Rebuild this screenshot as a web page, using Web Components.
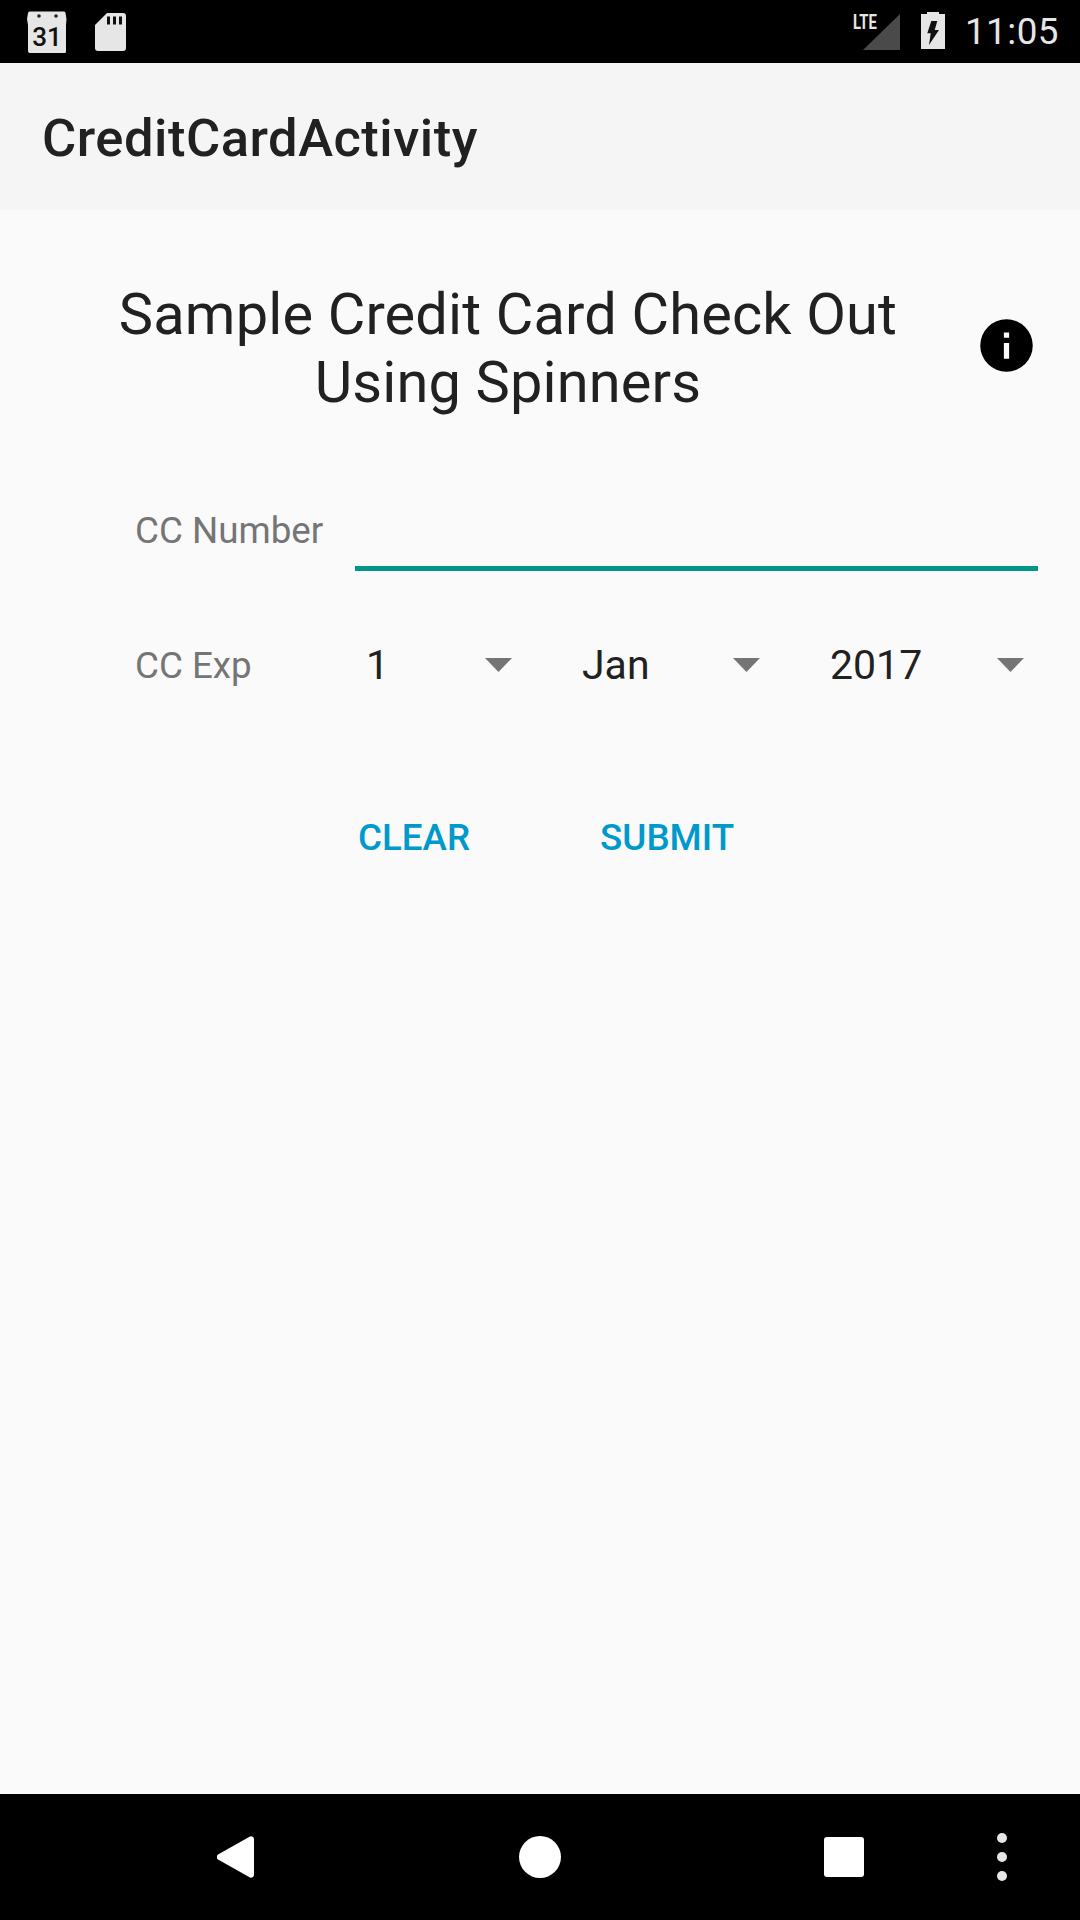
<!DOCTYPE html>
<html>
<head>
<meta charset="utf-8">
<style>
  html, body { margin: 0; padding: 0; }
  body {
    width: 1080px;
    height: 1920px;
    display: flex;
    flex-direction: column;
    background: #fafafa;
    font-family: Roboto, sans-serif;
    overflow: hidden;
  }
  check-out-page { flex: 1; }
</style>
</head>
<body>
<status-bar time="11:05"></status-bar>
<app-bar>CreditCardActivity</app-bar>
<check-out-page>
  <title-row>Sample Credit Card Check Out<br>Using Spinners</title-row>
  <form-row label="CC Number" class="number"><text-line></text-line></form-row>
  <form-row label="CC Exp" class="exp">
    <spin-ner value="1" style="width:216px;padding-left:11px;--arrow-right:59px"></spin-ner>
    <spin-ner value="Jan" style="width:247px;padding-left:11px;--arrow-right:58px"></spin-ner>
    <spin-ner value="2017" style="width:220px;--arrow-right:14px"></spin-ner>
  </form-row>
  <action-row>
    <flat-button>Clear</flat-button>
    <flat-button>Submit</flat-button>
  </action-row>
</check-out-page>
<nav-bar></nav-bar>

<script>
class StatusBar extends HTMLElement {
  constructor() {
    super();
    this.attachShadow({ mode: 'open' });
    this.shadowRoot.innerHTML = `
      <style>
        :host { display: flex; align-items: center; height: 63px; background: #000; color: #e6e6e6; }
        svg { display: block; flex: none; }
        .cal { margin-left: 27px; }
        .sd { margin-left: 28px; }
        .lte {
          margin-left: auto;
          width: 24px;
          font: 700 20px/20px Roboto, sans-serif;
          transform: translateY(-10px) scaleX(.74);
          transform-origin: left center;
          white-space: nowrap;
        }
        .signal { margin-left: -14px; }
        .battery { margin-left: 21px; margin-bottom: 2px; }
        .time { margin: 0 21px 0 20px; font-size: 36.75px; line-height: 63px; letter-spacing: .5px; }
      </style>
      <svg class="cal" width="40" height="42" viewBox="0 0 40 42">
        <path fill="#e6e6e6" d="M3 0.5h34q1.5 0 1.5 1.5l1 6-.5 6v26.5q0 1.5-1.5 1.5H2.5Q1 41.5 1 40V14L0 8l1-6q0-1.500 2-1.500z"/>
        <circle cx="12" cy="5" r="1.800" fill="#222"/><circle cx="29" cy="5" r="1.800" fill="#222"/>
        <text x="20" y="35" text-anchor="middle" font-family="Roboto" font-size="26" font-weight="500" fill="#111">31</text>
      </svg>
      <svg class="sd" width="31" height="38" viewBox="0 0 31 38">
        <path fill="#e6e6e6" d="M12 0h16q3 0 3 3v32q0 3-3 3H3q-3 0-3-3V12z"/>
        <path fill="#111" d="M12 3.500h3v8h-3zM18 3.500h3v8h-3zM24 3.500h3v8h-3z"/>
      </svg>
      <span class="lte">LTE</span>
      <svg class="signal" width="37" height="36" viewBox="0 0 37 36"><path fill="#4a4a4a" d="M37 0v36H0z"/></svg>
      <svg class="battery" width="24" height="37" viewBox="0 0 24 37">
        <path fill="#e6e6e6" d="M6 0h12v2h6v35H0V2h6z"/>
        <path fill="#111" d="M10.300 9h6l-2.600 9H18L8 33l1.700-11.700H6.300z"/>
      </svg>
      <span class="time"></span>
    `;
  }

  connectedCallback() {
    this.shadowRoot.querySelector('.time').textContent = this.getAttribute('time');
  }
}

class AppBar extends HTMLElement {
  constructor() {
    super();
    this.attachShadow({ mode: 'open' });
    this.shadowRoot.innerHTML = `
      <style>
        :host {
          display: flex;
          align-items: center;
          height: 147px;
          padding-left: 42px;
          background: #f5f5f5;
          color: #212121;
          font: 500 52.5px Roboto, sans-serif;
          letter-spacing: .5px;
        }
        span { margin-top: 2px; }
      </style>
      <span><slot></slot></span>
    `;
  }
}

class CheckOutPage extends HTMLElement {
  constructor() {
    super();
    this.attachShadow({ mode: 'open' });
    this.shadowRoot.innerHTML = `
      <style>
        :host { display: flex; flex-direction: column; padding: 70px 42px 0 0; color: #212121; }
      </style>
      <slot></slot>
    `;
  }
}

class TitleRow extends HTMLElement {
  constructor() {
    super();
    this.attachShadow({ mode: 'open' });
    this.shadowRoot.innerHTML = `
      <style>
        :host { display: flex; align-items: center; }
        .text {
          flex: 1;
          text-align: center;
          font-size: 57.75px;
          line-height: 68px;
          letter-spacing: .15px;
          padding-left: 49px;
        }
        svg { flex: none; display: block; margin-top: -6px; margin-left: 8px; }
      </style>
      <div class="text"><slot></slot></div>
      <svg width="63" height="63" viewBox="0 0 24 24">
        <path d="M12 2a10 10 0 1 0 0 20 10 10 0 0 0 0-20zm1 15h-2v-6h2zm0-8h-2V7h2z"/>
      </svg>
    `;
  }
}

class FormRow extends HTMLElement {
  constructor() {
    super();
    this.attachShadow({ mode: 'open' });
    this.shadowRoot.innerHTML = `
      <style>
        :host { display: flex; align-items: center; padding-left: 135px; }
        :host(.number) { margin-top: 86px; height: 80px; align-items: flex-start; }
        :host(.exp) { margin-top: 47px; height: 72px; }
        .label { width: 220px; flex: none; font-size: 36.75px; color: #757575; }
        :host(.number) .label { line-height: 58px; }
      </style>
      <div class="label"></div>
      <slot></slot>
    `;
  }

  connectedCallback() {
    this.shadowRoot.querySelector('.label').textContent = this.getAttribute('label');
  }
}

class TextLine extends HTMLElement {
  constructor() {
    super();
    this.attachShadow({ mode: 'open' });
    this.shadowRoot.innerHTML = `
      <style>
        :host { display: block; flex: 1; height: 69px; box-sizing: border-box; border-bottom: 5px solid #009688; }
      </style>
    `;
  }
}

class SpinNer extends HTMLElement {
  constructor() {
    super();
    this.attachShadow({ mode: 'open' });
    this.shadowRoot.innerHTML = `
      <style>
        :host { display: flex; align-items: center; justify-content: space-between; flex: none; padding-left: 12px; box-sizing: border-box; font-size: 41px; color: #212121; }
        svg { display: block; margin-right: var(--arrow-right, 20px); }
      </style>
      <span class="value"></span>
      <svg width="27" height="14" viewBox="0 0 27 14"><path fill="#757575" d="M0 0h27L13.500 14z"/></svg>
    `;
  }

  connectedCallback() {
    this.shadowRoot.querySelector('.value').textContent = this.getAttribute('value');
  }
}

class ActionRow extends HTMLElement {
  constructor() {
    super();
    this.attachShadow({ mode: 'open' });
    this.shadowRoot.innerHTML = `
      <style>
        :host { display: flex; gap: 130px; margin-top: 115px; padding-left: 358px; }
      </style>
      <slot></slot>
    `;
  }
}

class FlatButton extends HTMLElement {
  constructor() {
    super();
    this.attachShadow({ mode: 'open' });
    this.shadowRoot.innerHTML = `
      <style>
        :host { display: block; color: #0099cc; font: 500 36.75px/44px Roboto, sans-serif; text-transform: uppercase; }
      </style>
      <slot></slot>
    `;
  }
}

class NavBar extends HTMLElement {
  constructor() {
    super();
    this.attachShadow({ mode: 'open' });
    this.shadowRoot.innerHTML = `
      <style>
        :host { display: flex; align-items: center; height: 126px; background: #000; flex: none; }
        svg { display: block; flex: none; }
        .back { margin-left: 217px; }
        .home { margin-left: 265px; }
        .recent { margin-left: 263px; }
        .more { margin-left: 133px; }
      </style>
      <svg class="back" width="37" height="42" viewBox="0 0 37 42"><path fill="#fff" d="M33 .5a3 3 0 0 1 4 2.500v36a3 3 0 0 1-4 2.500L1 23.500a3 3 0 0 1 0-5z"/></svg>
      <svg class="home" width="42" height="42" viewBox="0 0 42 42"><circle cx="21" cy="21" r="21" fill="#fff"/></svg>
      <svg class="recent" width="40" height="40" viewBox="0 0 40 40"><rect width="40" height="40" rx="3" fill="#fff"/></svg>
      <svg class="more" width="10" height="48" viewBox="0 0 10 48">
        <circle cx="5" cy="5" r="5" fill="#e6e6e6"/><circle cx="5" cy="24" r="5" fill="#e6e6e6"/><circle cx="5" cy="43" r="5" fill="#e6e6e6"/>
      </svg>
    `;
  }
}

customElements.define('status-bar', StatusBar);
customElements.define('app-bar', AppBar);
customElements.define('check-out-page', CheckOutPage);
customElements.define('title-row', TitleRow);
customElements.define('form-row', FormRow);
customElements.define('text-line', TextLine);
customElements.define('spin-ner', SpinNer);
customElements.define('action-row', ActionRow);
customElements.define('flat-button', FlatButton);
customElements.define('nav-bar', NavBar);
</script>
</body>
</html>
